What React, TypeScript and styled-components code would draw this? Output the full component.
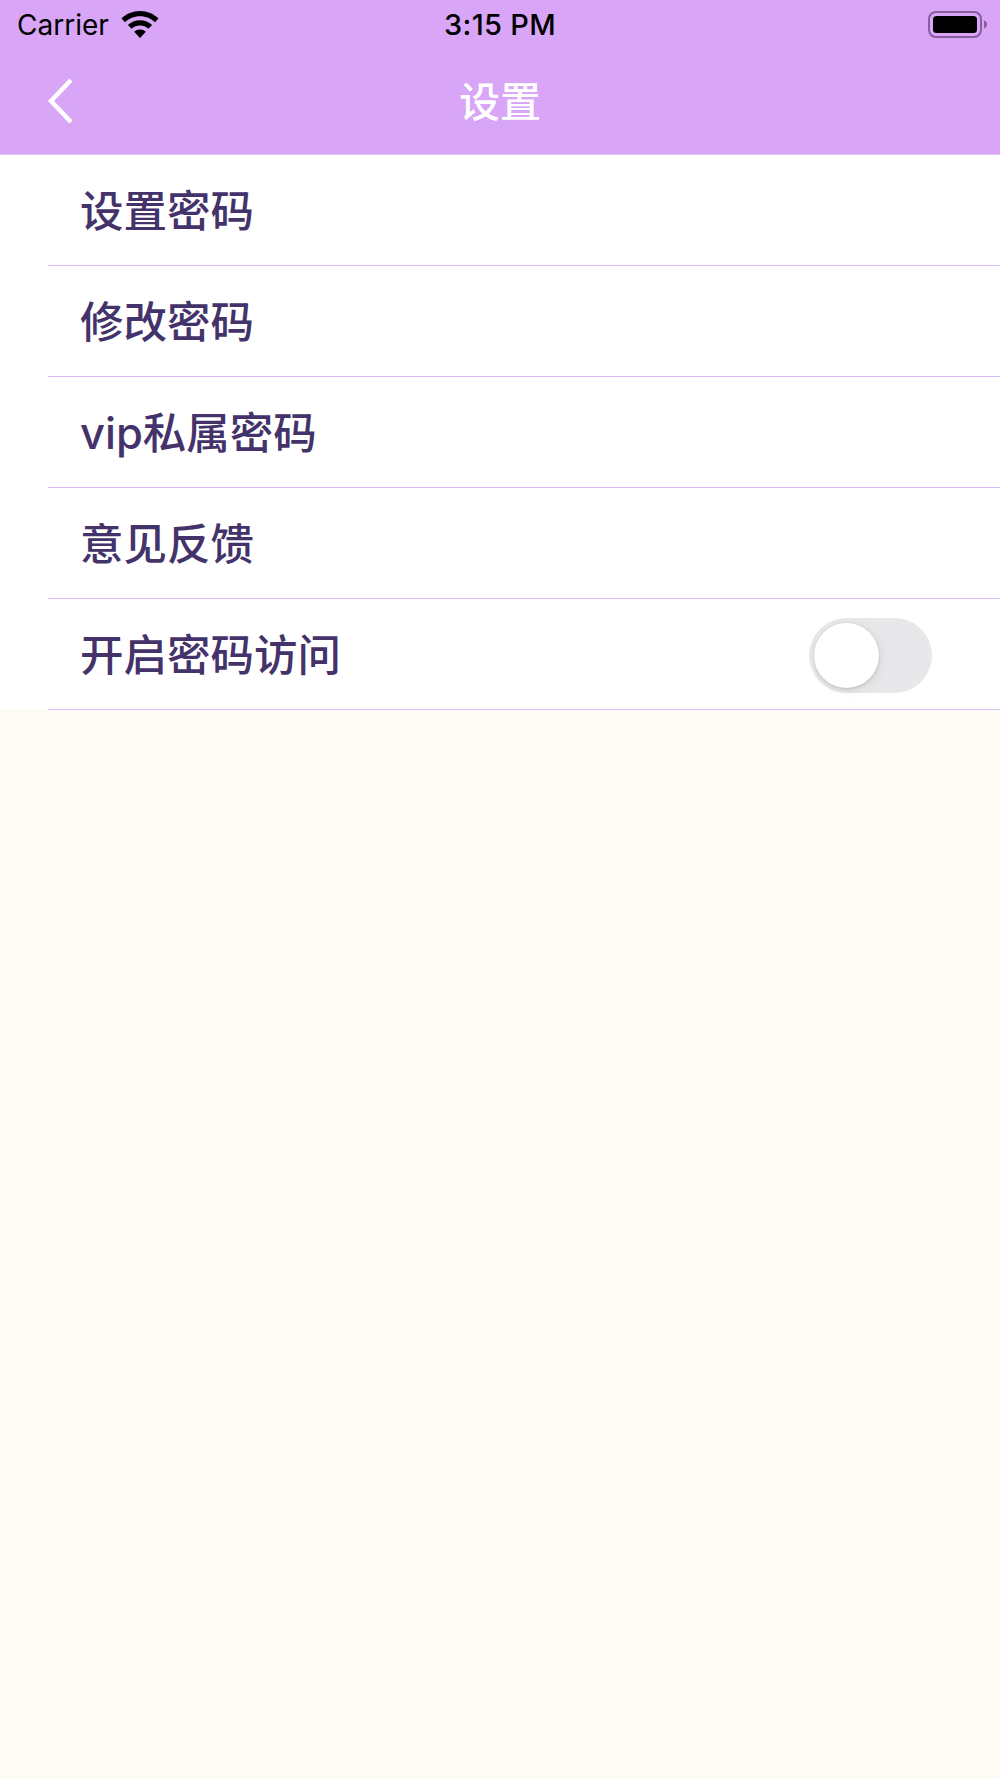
import React from "react";
import styled, { createGlobalStyle } from "styled-components";

const Global = createGlobalStyle`
  html, body { margin: 0; padding: 0; background: #fefbf4; }
  * { box-sizing: border-box; }
`;
const Page = styled.div`
  width: 1000px; height: 1778px; display: flex; flex-direction: column;
  background: #fefbf4; font-family: Inter, "Noto Sans CJK SC", sans-serif; overflow: hidden;
`;
const Header = styled.header`
  height: 155px; background: #d8a5f7; display: flex; flex-direction: column;
  border-bottom: 1px solid #e2c3f8;
`;
const StatusBar = styled.div`
  height: 50px; display: grid; grid-template-columns: 1fr auto 1fr; align-items: center;
  padding: 0 12px 1px; color: #000;
`;
const StatusLeft = styled.div`display: flex; align-items: center; gap: 12px; padding-left: 5px; font-size: 28px; font-weight: 400;`;
const Clock = styled.div`font-size: 29px; font-weight: 500; letter-spacing: 0.3px;`;
const StatusRight = styled.div`display: flex; justify-content: flex-end;`;
const Nav = styled.div`
  flex: 1; display: grid; grid-template-columns: 1fr auto 1fr; align-items: center; color: #fff;
`;
const BackSlot = styled.div`padding-left: 46px; display: flex;`;
const Title = styled.div`font-size: 41px; font-weight: 500; line-height: 1;`;
const List = styled.ul`margin: 0; padding: 0; list-style: none; background: #fff;`;
const Row = styled.li`
  height: 111px; margin-left: 48px; padding: 0 68px 0 32px; display: flex; align-items: center;
  justify-content: space-between; border-bottom: 1px solid #dcbdf9;
  color: #44336a; font-size: 43.5px; font-weight: 500;
`;
const Label = styled.span`margin-bottom: 4px;`;
const Track = styled.div`
  width: 123px; height: 75px; margin-top: 2px; border-radius: 38px; background: #e8e8ea; padding: 5px;
`;
const Thumb = styled.div`
  width: 65px; height: 65px; border-radius: 50%; background: #fff;
  box-shadow: 0 0 3px rgba(0,0,0,.1), 0 2px 3px rgba(0,0,0,.07), 3px 3px 12px rgba(0,0,0,.06);
`;

const Wifi = () => (
  <svg width="38" height="27" viewBox="0 0 38 27" aria-hidden="true">
    <path d="M19 0C11.6 0 5.2 2.9 0.5 7.5L4 11.2C7.8 7.5 13.1 5.2 19 5.2s11.2 2.3 15 6l3.5-3.7C32.8 2.9 26.400 0 19 0Z" />
    <path d="M19 9.200c-4.700 0-8.900 1.800-12.100 4.800l3.600 3.700c2.200-2.100 5.200-3.300 8.500-3.300s6.300 1.200 8.500 3.300l3.600-3.700C27.900 11 23.700 9.200 19 9.200Z" />
    <path d="M19 18.500c-2.300 0-4.300 .9-5.800 2.300L19 27l5.800-6.200c-1.500-1.400-3.500-2.300-5.800-2.300Z" />
  </svg>
);
const Battery = () => (
  <svg width="60" height="28" viewBox="0 0 60 28" aria-hidden="true">
    <rect x="1" y="1" width="52" height="25" rx="7" fill="none" stroke="#8b5d9f" strokeWidth="2" />
    <rect x="5" y="5" width="44" height="17" rx="3.500" fill="#000" />
    <path d="M56 9.500c2 .6 3 2.200 3 4s-1 3.400-3 4Z" fill="#8b5d9f" />
  </svg>
);
const Back = () => (
  <svg width="30" height="48" viewBox="0 0 30 48" fill="none" stroke="#fff" strokeWidth="4.500" aria-hidden="true">
    <path d="M25 2 5 23l20 21" />
  </svg>
);

const items = ["设置密码", "修改密码", "vip私属密码", "意见反馈"];

export default function App() {
  return (
    <Page>
      <Global />
      <Header>
        <StatusBar>
          <StatusLeft>Carrier <Wifi /></StatusLeft>
          <Clock>3:15 PM</Clock>
          <StatusRight><Battery /></StatusRight>
        </StatusBar>
        <Nav>
          <BackSlot><Back /></BackSlot>
          <Title>设置</Title>
          <div />
        </Nav>
      </Header>
      <List>
        {items.map((t) => <Row key={t}><Label>{t}</Label></Row>)}
        <Row><Label>开启密码访问</Label><Track><Thumb /></Track></Row>
      </List>
    </Page>
  );
}
